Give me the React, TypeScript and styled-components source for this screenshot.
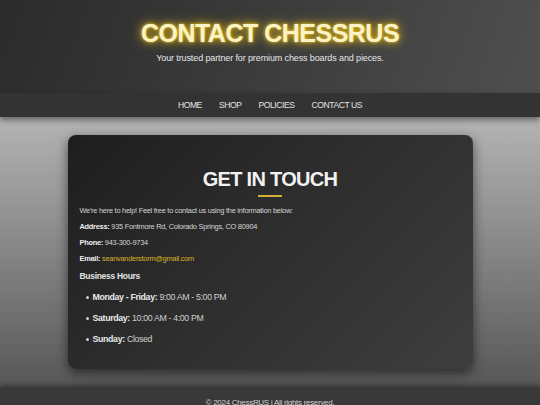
import React, {FC} from "react";
import styled, {createGlobalStyle} from "styled-components";

const GlobalStyle = createGlobalStyle`
  html, body {
    margin: 0;
    padding: 0;
  }

  body {
    font-family: "Liberation Sans", Arial, sans-serif;
    font-size: 7.4px;
    color: #ddd;
    background: #3a3a3a;
  }
`;

const Header = styled.header`
  height: 93px;
  box-sizing: border-box;
  padding-top: 18px;
  text-align: center;
  background: linear-gradient(110deg, #2b2b2b 0%, #3c3c3c 50%, #4f4f4f 100%);
`;

const Title = styled.h1`
  margin: 0;
  font-size: 25px;
  line-height: 30px;
  font-weight: bold;
  letter-spacing: -0.5px;
  color: #fbf3c8;
  text-shadow: 0 0 3px #f5cc20, 0 0 8px #d9ae14, 0 0 14px rgba(212, 175, 55, 0.6);
`;

const Tagline = styled.p`
  margin: 4px 0 0;
  font-size: 9px;
  line-height: 12px;
  letter-spacing: -0.12px;
  color: #e6e6e6;
`;

const Nav = styled.nav`
  height: 24px;
  display: flex;
  justify-content: center;
  align-items: center;
  gap: 17px;
  background: #333;
  box-shadow: 0 3px 6px rgba(0, 0, 0, 0.45);
  position: relative;
  z-index: 1;
`;

const NavLink = styled.a`
  font-size: 8.6px;
  letter-spacing: -0.45px;
  color: #e4e4e4;
  text-decoration: none;
`;

const Main = styled.main`
  padding: 18px 0 18px;
  display: flex;
  justify-content: center;
  background: linear-gradient(to bottom, #b4b4b4 0%, #8a8a8a 45%, #575757 100%);
`;

const Card = styled.section`
  width: 75%;
  box-sizing: border-box;
  padding: 12px 12px 15px;
  border-radius: 8px;
  background: linear-gradient(135deg, #1e1e1e 0%, #2d2d2d 45%, #3e3e3e 100%);
  box-shadow: 0 4px 12px rgba(0, 0, 0, 0.55);
`;

const CardTitle = styled.h2`
  margin: 20px 0 0;
  text-align: center;
  font-size: 20px;
  line-height: 24px;
  letter-spacing: -0.7px;
  color: #f2f2f2;

  &::after {
    content: "";
    display: block;
    width: 24px;
    height: 2px;
    margin: 4px auto 0;
    background: #d4af37;
  }
`;

const Text = styled.p`
  margin: 7px 0 7px;
  line-height: 9px;
  letter-spacing: -0.25px;
  color: #d6d6d6;

  &:first-of-type {
    margin-top: 9px;
  }

  & > strong {
    color: #eee;
  }
`;

const Email = styled.a`
  color: #d9b22a;
  text-decoration: none;
`;

const SubTitle = styled.h3`
  margin: 8px 0 0;
  font-size: 8.5px;
  line-height: 11px;
  letter-spacing: -0.3px;
  color: #e2e2e2;
`;

const HoursList = styled.ul`
  margin: 4px 0 0;
  padding-left: 6px;
  list-style: none;
`;

const HoursItem = styled.li`
  margin: 9px 0;
  font-size: 8.8px;
  line-height: 12px;
  letter-spacing: -0.35px;
  color: #cfcfcf;

  &::before {
    content: "";
    display: inline-block;
    width: 3px;
    height: 3px;
    margin: 0 4px 1px 0;
    border-radius: 50%;
    background: #cfcfcf;
    vertical-align: middle;
  }

  & > strong {
    color: #e8e8e8;
  }
`;

const Footer = styled.footer`
  padding: 11px 0 12px;
  text-align: center;
  font-size: 8px;
  letter-spacing: -0.3px;
  color: #d0d0d0;
  background: #393939;
  box-shadow: 0 -2px 5px rgba(0, 0, 0, 0.35);
`;

type Hours = {
    day: string;
    time: string;
}

const hours: Hours[] = [
    {day: "Monday - Friday:", time: "9:00 AM - 5:00 PM"},
    {day: "Saturday:", time: "10:00 AM - 4:00 PM"},
    {day: "Sunday:", time: "Closed"},
];

const links = ["HOME", "SHOP", "POLICIES", "CONTACT US"];

const App: FC = () => {
    return (
        <>
            <GlobalStyle/>
            <Header>
                <Title>CONTACT CHESSRUS</Title>
                <Tagline>Your trusted partner for premium chess boards and pieces.</Tagline>
            </Header>
            <Nav>
                {links.map(link => <NavLink key={link} href="#">{link}</NavLink>)}
            </Nav>
            <Main>
                <Card>
                    <CardTitle>GET IN TOUCH</CardTitle>
                    <Text>We're here to help! Feel free to contact us using the information below:</Text>
                    <Text><strong>Address:</strong> 935 Fontmore Rd, Colorado Springs, CO 80904</Text>
                    <Text><strong>Phone:</strong> 943-300-9734</Text>
                    <Text><strong>Email:</strong> <Email href="#">seanvanderstorm@gmail.com</Email></Text>
                    <SubTitle>Business Hours</SubTitle>
                    <HoursList>
                        {hours.map(h => (
                            <HoursItem key={h.day}><strong>{h.day}</strong> {h.time}</HoursItem>
                        ))}
                    </HoursList>
                </Card>
            </Main>
            <Footer>© 2024 ChessRUS | All rights reserved.</Footer>
        </>
    )
}

export default App;
